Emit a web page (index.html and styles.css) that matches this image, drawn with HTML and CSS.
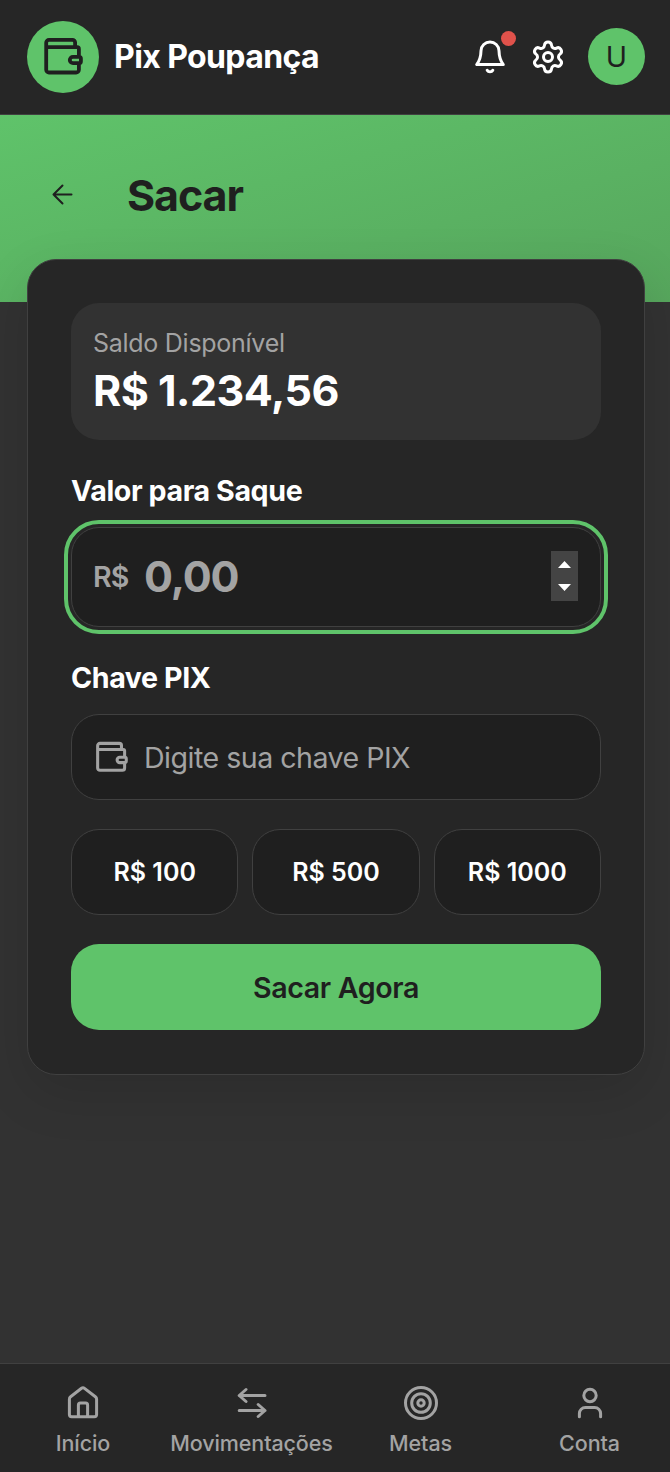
FILE: index.html
```html
<!DOCTYPE html>
<html lang="pt-BR">
<head>
<meta charset="utf-8">
<title>Pix Poupança</title>
<link rel="stylesheet" href="styles.css">
</head>
<body>
<svg class="defs" width="0" height="0" aria-hidden="true">
  <symbol id="wallet" viewBox="0 0 40 40">
    <path d="M32.1 10.2V5.6a2.7 2.7 0 0 0-2.7-2.7H6a2.8 2.8 0 0 0-2.8 2.8v27a2.8 2.8 0 0 0 2.8 2.8h27.1a2.8 2.8 0 0 0 2.8-2.8v-6.5M3.2 8.2c0 1.200.8 2 2 2h29a1.700 1.700 0 0 1 1.700 1.700v7.900M30 19.800h6.200a1.700 1.700 0 0 1 1.700 1.700v3a1.700 1.700 0 0 1-1.700 1.700H30a3.200 3.200 0 0 1 0-6.400z"/>
  </symbol>
</svg>
<div class="app">
  <header class="topbar">
    <div class="logo"><svg class="icon logo-icon"><use href="#wallet"/></svg></div>
    <h1 class="brand">Pix Poupança</h1>
    <div class="actions">
      <div class="bell">
        <svg class="icon" width="36" height="36" viewBox="0 0 36 36"><path d="M18 3a9 9 0 0 0-9 8.7C8.9 18 7.400 22 4.700 25.600H31.300C28.600 22 27.100 18 27 11.700A9 9 0 0 0 18 3zM15.200 31.200a3.200 3.200 0 0 0 5.600 0"/></svg>
        <span class="badge"></span>
      </div>
      <svg class="icon gear" width="36" height="36" viewBox="0 0 24 24"><path d="M9.671 4.136a2.34 2.34 0 0 1 4.659 0 2.34 2.34 0 0 0 3.319 1.915 2.34 2.34 0 0 1 2.33 4.033 2.34 2.34 0 0 0 0 3.831 2.34 2.34 0 0 1-2.33 4.033 2.34 2.34 0 0 0-3.319 1.915 2.34 2.34 0 0 1-4.659 0 2.34 2.34 0 0 0-3.32-1.915 2.34 2.34 0 0 1-2.33-4.033 2.34 2.34 0 0 0 0-3.831A2.34 2.34 0 0 1 6.35 6.051a2.34 2.34 0 0 0 3.319-1.915z"/><circle cx="12" cy="12" r="3"/></svg>
      <div class="avatar">U</div>
    </div>
  </header>
  <section class="hero">
    <svg class="icon back" width="24" height="24" viewBox="0 0 24 24"><path d="M21.500 12.500H3.500M12.500 3.500l-9 9 9 9"/></svg>
    <h2 class="hero-title">Sacar</h2>
  </section>
  <main class="card">
    <div class="balance">
      <span class="balance-label">Saldo Disponível</span>
      <strong class="balance-value">R$ 1.234,56</strong>
    </div>
    <div class="label">Valor para Saque</div>
    <div class="field amount">
      <span class="currency">R$</span>
      <span class="amount-value">0,00</span>
      <span class="spinner"><svg width="27" height="50" viewBox="0 0 27 50"><path d="M7 17l6.500-7 6.500 7zM7 33l6.500 7 6.500-7z"/></svg></span>
    </div>
    <div class="label label-key">Chave PIX</div>
    <div class="field key">
      <svg class="icon key-icon"><use href="#wallet"/></svg>
      <span class="key-text">Digite sua chave PIX</span>
    </div>
    <div class="presets">
      <div class="preset">R$ 100</div>
      <div class="preset">R$ 500</div>
      <div class="preset">R$ 1000</div>
    </div>
    <div class="submit">Sacar Agora</div>
  </main>
  <nav class="tabs">
    <div class="tab"><svg class="icon" width="36" height="36" viewBox="0 0 36 36"><path d="M4.400 14.200c0-1 .4-1.800 1.200-2.400L16.500 3.300a2.400 2.400 0 0 1 3 0l10.900 8.500c.8.600 1.200 1.400 1.200 2.400v15.300a2.200 2.200 0 0 1-2.200 2.200H6.600a2.200 2.200 0 0 1-2.200-2.200zM13.400 31.500V20a2 2 0 0 1 2-2h5.200a2 2 0 0 1 2 2v11.500"/></svg><span>Início</span></div>
    <div class="tab"><svg class="icon" width="36" height="36" viewBox="0 0 36 36"><path d="M31 10.500H5.200M12 4.500l-6.800 6 6.800 6M5.200 25.500H31M24.200 19.500l6.800 6-6.800 6"/></svg><span>Movimentações</span></div>
    <div class="tab"><svg class="icon" width="36" height="36" viewBox="0 0 36 36"><circle cx="18" cy="18" r="15.500"/><circle cx="18" cy="18" r="9.300"/><circle cx="18" cy="18" r="3.200"/></svg><span>Metas</span></div>
    <div class="tab"><svg class="icon" width="36" height="36" viewBox="0 0 36 36"><circle cx="18" cy="10.500" r="6.200"/><path d="M7.400 31.700V28.500a6 6 0 0 1 6-6h9.200a6 6 0 0 1 6 6v3.200"/></svg><span>Conta</span></div>
  </nav>
</div>
</body>
</html>
```
FILE: styles.css
```css
* { box-sizing: border-box; }
body {
  margin: 0;
  font-family: Inter, "Liberation Sans", sans-serif;
  color: #fff;
  background: #323232;
}
.defs { position: absolute; }
.app { display: flex; flex-direction: column; height: 1472px; overflow: hidden; }
.icon {
  display: block;
  flex: none;
  fill: none;
  stroke: currentColor;
  stroke-width: 3;
  stroke-linecap: round;
  stroke-linejoin: round;
}
.topbar {
  display: flex;
  align-items: center;
  flex: none;
  height: 115px;
  padding: 0 25px 0 27px;
  background: #262626;
  border-bottom: 1px solid #404040;
}
.logo {
  display: flex;
  width: 72px;
  height: 72px;
  padding: 16px 0 0 16px;
  border-radius: 50%;
  background: #5fc36a;
  color: #1f1f1f;
}
.logo-icon { width: 40px; height: 40px; stroke-width: 3.8; }
.brand { margin: 0 0 0 15px; font-size: 32px; line-height: 40px; font-weight: 750; letter-spacing: -0.6px; white-space: nowrap; }
.actions { display: flex; align-items: center; margin-left: auto; }
.bell { position: relative; }
.badge {
  position: absolute;
  left: 29px;
  top: -8px;
  width: 15px;
  height: 15px;
  border-radius: 50%;
  background: #e0524b;
}
.gear { margin-left: 22px; stroke-width: 2; }
.avatar {
  width: 57px;
  height: 57px;
  margin: 0 0 1px 22px;
  border-radius: 50%;
  background: #5fc36a;
  color: #1f1f1f;
  font-size: 28.6px;
  line-height: 58px;
  text-align: center;
}
.hero {
  display: flex;
  align-items: flex-start;
  flex: none;
  height: 187px;
  padding: 54px 50px;
  background: linear-gradient(to bottom right, #5fc36a, #57a65d);
  color: #1f1f1f;
}
.back { margin-top: 13px; stroke-width: 2; }
.hero-title { margin: 0 0 0 53px; font-size: 43px; line-height: 52px; font-weight: 700; letter-spacing: -1.1px; }
.card {
  position: relative;
  flex: none;
  width: 618px;
  height: 816px;
  margin: -43px 0 0 27px;
  padding: 43px;
  border: 1px solid #404040;
  border-radius: 29px;
  background: #262626;
  box-shadow: 0 18px 54px rgba(0, 0, 0, 0.12);
}
.balance {
  display: flex;
  flex-direction: column;
  height: 137px;
  padding: 22px;
  border-radius: 28px;
  background: #323232;
}
.balance-label { font-size: 25px; line-height: 36px; letter-spacing: -0.27px; color: #a3a3a3; }
.balance-value { font-size: 43px; line-height: 58px; font-weight: 700; letter-spacing: -0.5px; }
.label { margin-top: 29px; height: 43px; font-size: 28.6px; line-height: 43px; font-weight: 650; letter-spacing: -0.4px; }
.field {
  display: flex;
  align-items: center;
  padding: 0 22px;
  border: 1px solid #404040;
  border-radius: 28px;
  background: #1f1f1f;
  color: #a3a3a3;
}
.amount { height: 100px; margin-top: 15px; padding-bottom: 2px; outline: 4px solid #5fc36a; outline-offset: 3px; }
.currency { width: 51px; margin-left: -1px; font-size: 28.6px; font-weight: 600; letter-spacing: -0.9px; }
.amount-value { font-size: 43px; font-weight: 700; letter-spacing: -1.1px; }
.spinner { display: block; width: 27px; height: 50px; margin-left: auto; background: #444; }
.spinner svg { display: block; fill: #fff; }
.key { height: 86px; margin-top: 15px; }
.key-icon { width: 33px; height: 33px; margin: 0 16px 0 1px; stroke-width: 3.7; }
.key-text { font-size: 28.6px; letter-spacing: -0.52px; }
.presets { display: grid; grid-template-columns: repeat(3, 1fr); gap: 14px; margin-top: 29px; }
.preset {
  display: grid;
  place-items: center;
  height: 86px;
  border: 1px solid #404040;
  border-radius: 28px;
  background: #1f1f1f;
  font-size: 25px;
  font-weight: 600;
}
.submit {
  display: grid;
  place-items: center;
  height: 86px;
  margin-top: 29px;
  border-radius: 28px;
  background: #5fc36a;
  color: #1f1f1f;
  font-size: 28.6px;
  font-weight: 600;
  letter-spacing: -0.36px;
}
.tabs {
  display: grid;
  grid-template-columns: 166px 171px 167px 171px;
  height: 109px;
  margin-top: auto;
  padding-top: 21px;
  overflow: hidden;
  border-top: 1px solid #404040;
  background: #262626;
  color: #a3a3a3;
}
.tab { display: flex; flex-direction: column; align-items: center; gap: 8px; font-size: 21.5px; line-height: 28px; font-weight: 550; letter-spacing: -0.1px; }
```
